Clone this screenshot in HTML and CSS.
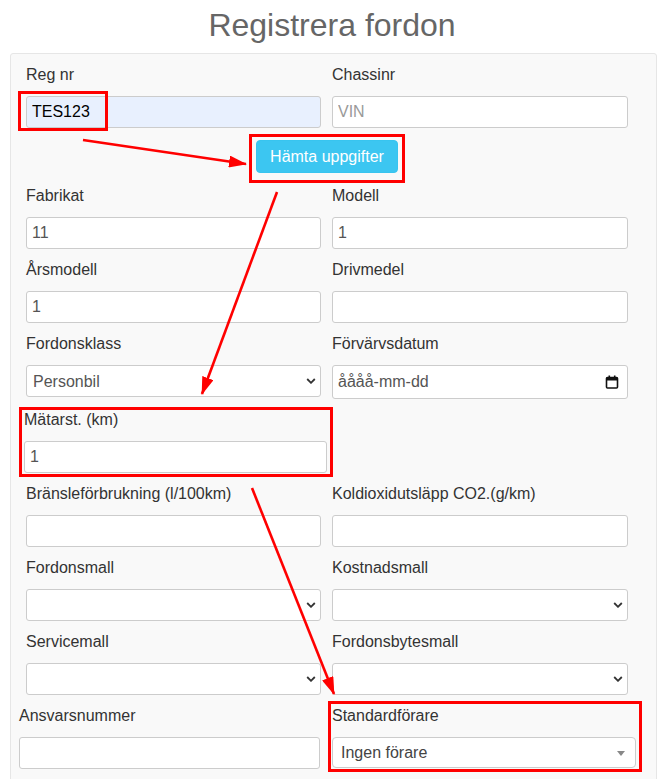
FILE: index.html
```html
<!DOCTYPE html>
<html lang="sv">
<head>
<meta charset="utf-8">
<title>Registrera fordon</title>
<link rel="stylesheet" href="styles.css">
</head>
<body>
<div class="page">
  <h1 class="title">Registrera fordon</h1>
  <div class="panel">
    <div class="form-grid">
      <div class="group">
        <label class="lbl">Reg nr</label>
        <input class="field field--autofill" type="text" value="TES123">
      </div>
      <div class="group">
        <label class="lbl">Chassinr</label>
        <input class="field" type="text" placeholder="VIN">
      </div>

      <div class="actions">
        <button class="btn" type="button">Hämta uppgifter</button>
      </div>

      <div class="group">
        <label class="lbl">Fabrikat</label>
        <input class="field" type="text" value="11">
      </div>
      <div class="group">
        <label class="lbl">Modell</label>
        <input class="field" type="text" value="1">
      </div>

      <div class="group">
        <label class="lbl">Årsmodell</label>
        <input class="field" type="text" value="1">
      </div>
      <div class="group">
        <label class="lbl">Drivmedel</label>
        <input class="field" type="text" value="">
      </div>

      <div class="group">
        <label class="lbl">Fordonsklass</label>
        <div class="select">
          <select class="field field--select"><option>Personbil</option></select>
          <svg class="chev" viewBox="0 0 10 6" width="10" height="6"><path d="M1.2 1 L5 4.8 L8.8 1" fill="none" stroke="#333" stroke-width="1.8"/></svg>
        </div>
      </div>
      <div class="group">
        <label class="lbl">Förvärvsdatum</label>
        <div class="field field--date">
          <span>åååå-mm-dd</span>
          <svg class="cal" viewBox="0 0 14 14" width="14" height="14"><rect x="1.5" y="2.5" width="11" height="10.5" rx="1" fill="none" stroke="#111" stroke-width="1.6"/><rect x="1.5" y="2.5" width="11" height="3" fill="#111"/><rect x="3.5" y="0.5" width="1.6" height="2.5" fill="#111"/><rect x="8.9" y="0.5" width="1.6" height="2.5" fill="#111"/></svg>
        </div>
      </div>

      <div class="group group--meter">
        <label class="lbl">Mätarst. (km)</label>
        <input class="field" type="text" value="1">
      </div>

      <div class="group group--first">
        <label class="lbl">Bränsleförbrukning (l/100km)</label>
        <input class="field" type="text" value="">
      </div>
      <div class="group">
        <label class="lbl">Koldioxidutsläpp CO2.(g/km)</label>
        <input class="field" type="text" value="">
      </div>

      <div class="group">
        <label class="lbl">Fordonsmall</label>
        <div class="select">
          <select class="field field--select"><option></option></select>
          <svg class="chev" viewBox="0 0 10 6" width="10" height="6"><path d="M1.2 1 L5 4.8 L8.8 1" fill="none" stroke="#333" stroke-width="1.8"/></svg>
        </div>
      </div>
      <div class="group">
        <label class="lbl">Kostnadsmall</label>
        <div class="select">
          <select class="field field--select"><option></option></select>
          <svg class="chev" viewBox="0 0 10 6" width="10" height="6"><path d="M1.2 1 L5 4.8 L8.8 1" fill="none" stroke="#333" stroke-width="1.8"/></svg>
        </div>
      </div>

      <div class="group">
        <label class="lbl">Servicemall</label>
        <div class="select">
          <select class="field field--select"><option></option></select>
          <svg class="chev" viewBox="0 0 10 6" width="10" height="6"><path d="M1.2 1 L5 4.8 L8.8 1" fill="none" stroke="#333" stroke-width="1.8"/></svg>
        </div>
      </div>
      <div class="group">
        <label class="lbl">Fordonsbytesmall</label>
        <div class="select">
          <select class="field field--select"><option></option></select>
          <svg class="chev" viewBox="0 0 10 6" width="10" height="6"><path d="M1.2 1 L5 4.8 L8.8 1" fill="none" stroke="#333" stroke-width="1.8"/></svg>
        </div>
      </div>

      <div class="group group--resp">
        <label class="lbl">Ansvarsnummer</label>
        <input class="field" type="text" value="">
      </div>
      <div class="group group--driver">
        <label class="lbl">Standardförare</label>
        <div class="s2">
          <span class="s2-text">Ingen förare</span>
          <span class="s2-arrow"></span>
        </div>
      </div>
    </div>
  </div>

  <svg class="annot" width="664" height="779" viewBox="0 0 664 779">
    <defs>
      <marker id="ah" markerWidth="18" markerHeight="12" refX="17" refY="6" orient="auto" markerUnits="userSpaceOnUse">
        <path d="M0 0 L18 6 L0 12 z" fill="#f00"/>
      </marker>
    </defs>
    <g fill="none" stroke="#f00" stroke-width="3">
      <rect x="19.5" y="92.5" width="87" height="37"/>
      <rect x="250.5" y="135.5" width="153" height="46"/>
      <rect x="20.5" y="408.5" width="311" height="67"/>
      <rect x="329.5" y="702.5" width="311" height="68"/>
    </g>
    <g stroke="#f00" stroke-width="2.6">
      <line x1="83" y1="140" x2="246" y2="164" marker-end="url(#ah)"/>
      <line x1="277" y1="192" x2="202" y2="394" marker-end="url(#ah)"/>
      <line x1="252" y1="488" x2="334" y2="694" marker-end="url(#ah)"/>
    </g>
  </svg>
</div>
</body>
</html>
```

FILE: styles.css
```css
* {
  box-sizing: border-box;
}

html,
body {
  margin: 0;
  padding: 0;
  background: #fff;
  overflow: hidden;
}

body {
  font-family: "Liberation Sans", Arial, sans-serif;
  color: #333;
}

.page {
  position: relative;
  display: flow-root;
  width: 664px;
  height: 779px;
}

.title {
  margin: 7px 0 10px;
  font-size: 32px;
  line-height: 36px;
  font-weight: 400;
  color: #666;
  text-align: center;
}

.panel {
  margin: 0 7px 0 10px;
  border: 1px solid #e6e6e6;
  border-radius: 3px;
  background: #f9f9f9;
  padding: 10px 15px 30px;
}

.form-grid {
  display: grid;
  grid-template-columns: 295px 296px;
  column-gap: 11px;
}

.group {
  margin-bottom: 10px;
  min-width: 0;
}

.group--meter {
  grid-column: 1;
  margin-left: -2px;
  margin-right: -6px;
}

.group--first {
  grid-column: 1;
}

.group--resp {
  margin-left: -7px;
  margin-right: 1px;
}

.group--driver {
  margin-right: -8px;
}

.lbl {
  display: block;
  font-size: 16px;
  line-height: 22px;
  margin-bottom: 10px;
  color: #333;
}

.field {
  display: block;
  width: 100%;
  height: 32px;
  margin: 0;
  padding: 0 5px;
  border: 1px solid #ccc;
  border-radius: 3px;
  background: #fff;
  font: 16px "Liberation Sans", Arial, sans-serif;
  color: #555;
  outline: none;
}

.field::placeholder {
  color: #999;
}

.field--autofill {
  background: #e8f0fe;
  color: #000;
}

.select {
  position: relative;
}

.field--select {
  appearance: none;
  -webkit-appearance: none;
  padding: 0 20px 0 6px;
}

.chev {
  position: absolute;
  right: 5px;
  top: 13px;
}

.field--date {
  height: 34px;
  display: flex;
  align-items: center;
  justify-content: space-between;
  padding: 0 8px 0 5px;
  color: #555;
}

.cal {
  display: block;
}

.actions {
  grid-column: 1 / -1;
  display: flex;
  justify-content: center;
  margin: 2px 0 12px;
}

.btn {
  height: 33px;
  padding: 0 13px;
  border: 1px solid #38c4ef;
  border-radius: 4px;
  background: #3cc6f1;
  color: #fff;
  font: 16px "Liberation Sans", Arial, sans-serif;
}

.s2 {
  height: 31px;
  display: flex;
  align-items: center;
  justify-content: space-between;
  padding: 0 10px 0 8px;
  border: 1px solid #ccc;
  border-radius: 4px;
  background: #fff;
  color: #444;
  font-size: 16px;
}

.s2-arrow {
  width: 0;
  height: 0;
  border-left: 4px solid transparent;
  border-right: 4px solid transparent;
  border-top: 5px solid #888;
  margin-top: 1px;
}

.annot {
  position: absolute;
  left: 0;
  top: 0;
  pointer-events: none;
}
```
